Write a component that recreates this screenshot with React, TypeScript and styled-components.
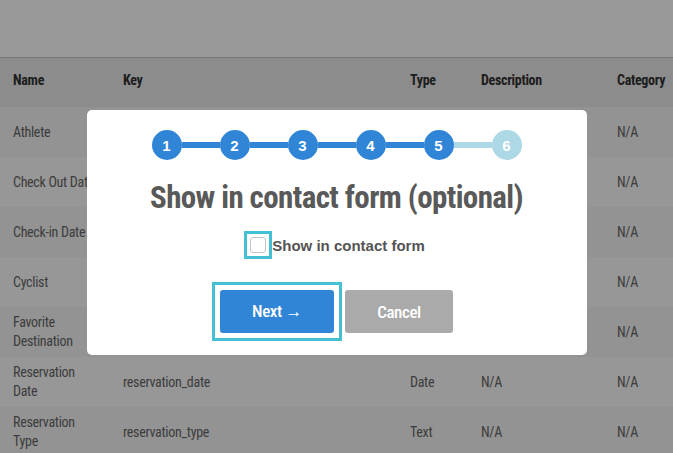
import * as React from "react";
import styled, { createGlobalStyle } from "styled-components";

const GlobalStyle = createGlobalStyle`
  html, body {
    margin: 0;
    padding: 0;
    background: #fff;
    font-family: "Roboto Condensed", Roboto, "Liberation Sans", sans-serif;
    overflow: hidden;
  }
`;

const Page = styled.div`
  position: relative;
  width: 673px;
  height: 453px;
  overflow: hidden;
  background: #fff;
`;

const TopBar = styled.div`
  height: 57px;
  border-bottom: 1px solid #c8c8c8;
`;

const Row = styled.div<{ $bg: string; $height: number }>`
  display: grid;
  grid-template-columns: 110px 287px 71px 136px 1fr;
  align-items: center;
  height: ${(p) => p.$height}px;
  padding-left: 13px;
  background: ${(p) => p.$bg};
`;

const Cell = styled.div<{ $head?: boolean }>`
  font-size: 14px;
  line-height: 19px;
  letter-spacing: -0.3px;
  font-weight: ${(p) => (p.$head ? 700 : 400)};
  color: ${(p) => (p.$head ? "#333" : "#666")};
  white-space: ${(p) => (p.$head ? "nowrap" : "normal")};
  margin-top: ${(p) => (p.$head ? -4 : 0)}px;
  padding-right: 24px;
`;

const Overlay = styled.div`
  position: absolute;
  inset: 0;
  background: rgba(0, 0, 0, 0.4);
  display: flex;
  justify-content: center;
  align-items: flex-start;
  padding-top: 110px;
`;

const Modal = styled.div`
  width: 500px;
  height: 245px;
  background: #fff;
  border-radius: 5px;
  display: flex;
  flex-direction: column;
  align-items: center;
  padding-top: 20px;
  box-sizing: border-box;
`;

const Stepper = styled.div`
  display: flex;
  align-items: center;
`;

const StepDot = styled.div<{ $done: boolean }>`
  width: 30px;
  height: 30px;
  border-radius: 50%;
  background: ${(p) => (p.$done ? "#3085d6" : "#add8e6")};
  color: #fff;
  font-family: "Liberation Sans", Arial, sans-serif;
  font-weight: 700;
  font-size: 15px;
  display: flex;
  align-items: center;
  justify-content: center;
`;

const StepLine = styled.div<{ $done: boolean }>`
  width: 38px;
  height: 6px;
  background: ${(p) => (p.$done ? "#3085d6" : "#add8e6")};
`;

const Title = styled.h2`
  margin: 18px 0 0;
  font-size: 31px;
  line-height: 40px;
  font-weight: 700;
  letter-spacing: -0.6px;
  color: #595959;
`;

const CheckRow = styled.label`
  display: flex;
  align-items: center;
  margin-top: 13px;
  margin-left: -4px;
  font-family: "Liberation Sans", Arial, sans-serif;
  font-weight: 700;
  font-size: 15px;
  color: #545454;
`;

const FocusRing = styled.span<{ $pad: number }>`
  display: inline-flex;
  border: 3px solid #44c0d4;
  padding: ${(p) => p.$pad}px;
`;

const CheckBox = styled.span`
  width: 14px;
  height: 14px;
  border: 1px solid #c4c4c4;
  border-radius: 3px;
  background: #fff;
`;

const Buttons = styled.div`
  display: flex;
  align-items: center;
  gap: 3px;
  margin-top: 23px;
  margin-left: -8px;
`;

const Button = styled.button<{ $primary?: boolean }>`
  width: ${(p) => (p.$primary ? 114 : 108)}px;
  height: 43px;
  border: 0;
  border-radius: 3px;
  background: ${(p) => (p.$primary ? "#3085d6" : "#aaa")};
  color: #fff;
  font-family: "Roboto Condensed", Roboto, "Liberation Sans", sans-serif;
  font-size: 17px;
  font-weight: 500;
  letter-spacing: -0.4px;
  padding: 0;
`;

const headers = ["Name", "Key", "Type", "Description", "Category"];

const rows = [
  ["Athlete", "athlete", "Checkbox", "N/A", "N/A"],
  ["Check Out Date", "check_out_date", "Date", "N/A", "N/A"],
  ["Check-in Date", "check_in_date", "Date", "N/A", "N/A"],
  ["Cyclist", "cyclist", "Checkbox", "N/A", "N/A"],
  ["Favorite Destination", "favorite_destination", "Text", "N/A", "N/A"],
  ["Reservation Date", "reservation_date", "Date", "N/A", "N/A"],
  ["Reservation Type", "reservation_type", "Text", "N/A", "N/A"],
];

const App = () => {
  const steps = [1, 2, 3, 4, 5, 6];
  return (
    <Page>
      <GlobalStyle />
      <TopBar />
      <Row $bg="#eaeaea" $height={49}>
        {headers.map((h) => (
          <Cell $head key={h}>{h}</Cell>
        ))}
      </Row>
      {rows.map((r, i) => (
        <Row key={r[0]} $bg={i % 2 === 0 ? "#f5f5f5" : "#fcfcfc"} $height={50}>
          {r.map((c, j) => (
            <Cell key={j}>{c}</Cell>
          ))}
        </Row>
      ))}
      <Overlay>
        <Modal>
          <Stepper>
            {steps.map((s, i) => (
              <React.Fragment key={s}>
                {i > 0 && <StepLine $done={s < 6} />}
                <StepDot $done={s < 6}>{s}</StepDot>
              </React.Fragment>
            ))}
          </Stepper>
          <Title>Show in contact form (optional)</Title>
          <CheckRow>
            <FocusRing $pad={3}>
              <CheckBox />
            </FocusRing>
            Show in contact form
          </CheckRow>
          <Buttons>
            <FocusRing $pad={5}>
              <Button $primary>Next →</Button>
            </FocusRing>
            <Button>Cancel</Button>
          </Buttons>
        </Modal>
      </Overlay>
    </Page>
  );
};

export default App;
